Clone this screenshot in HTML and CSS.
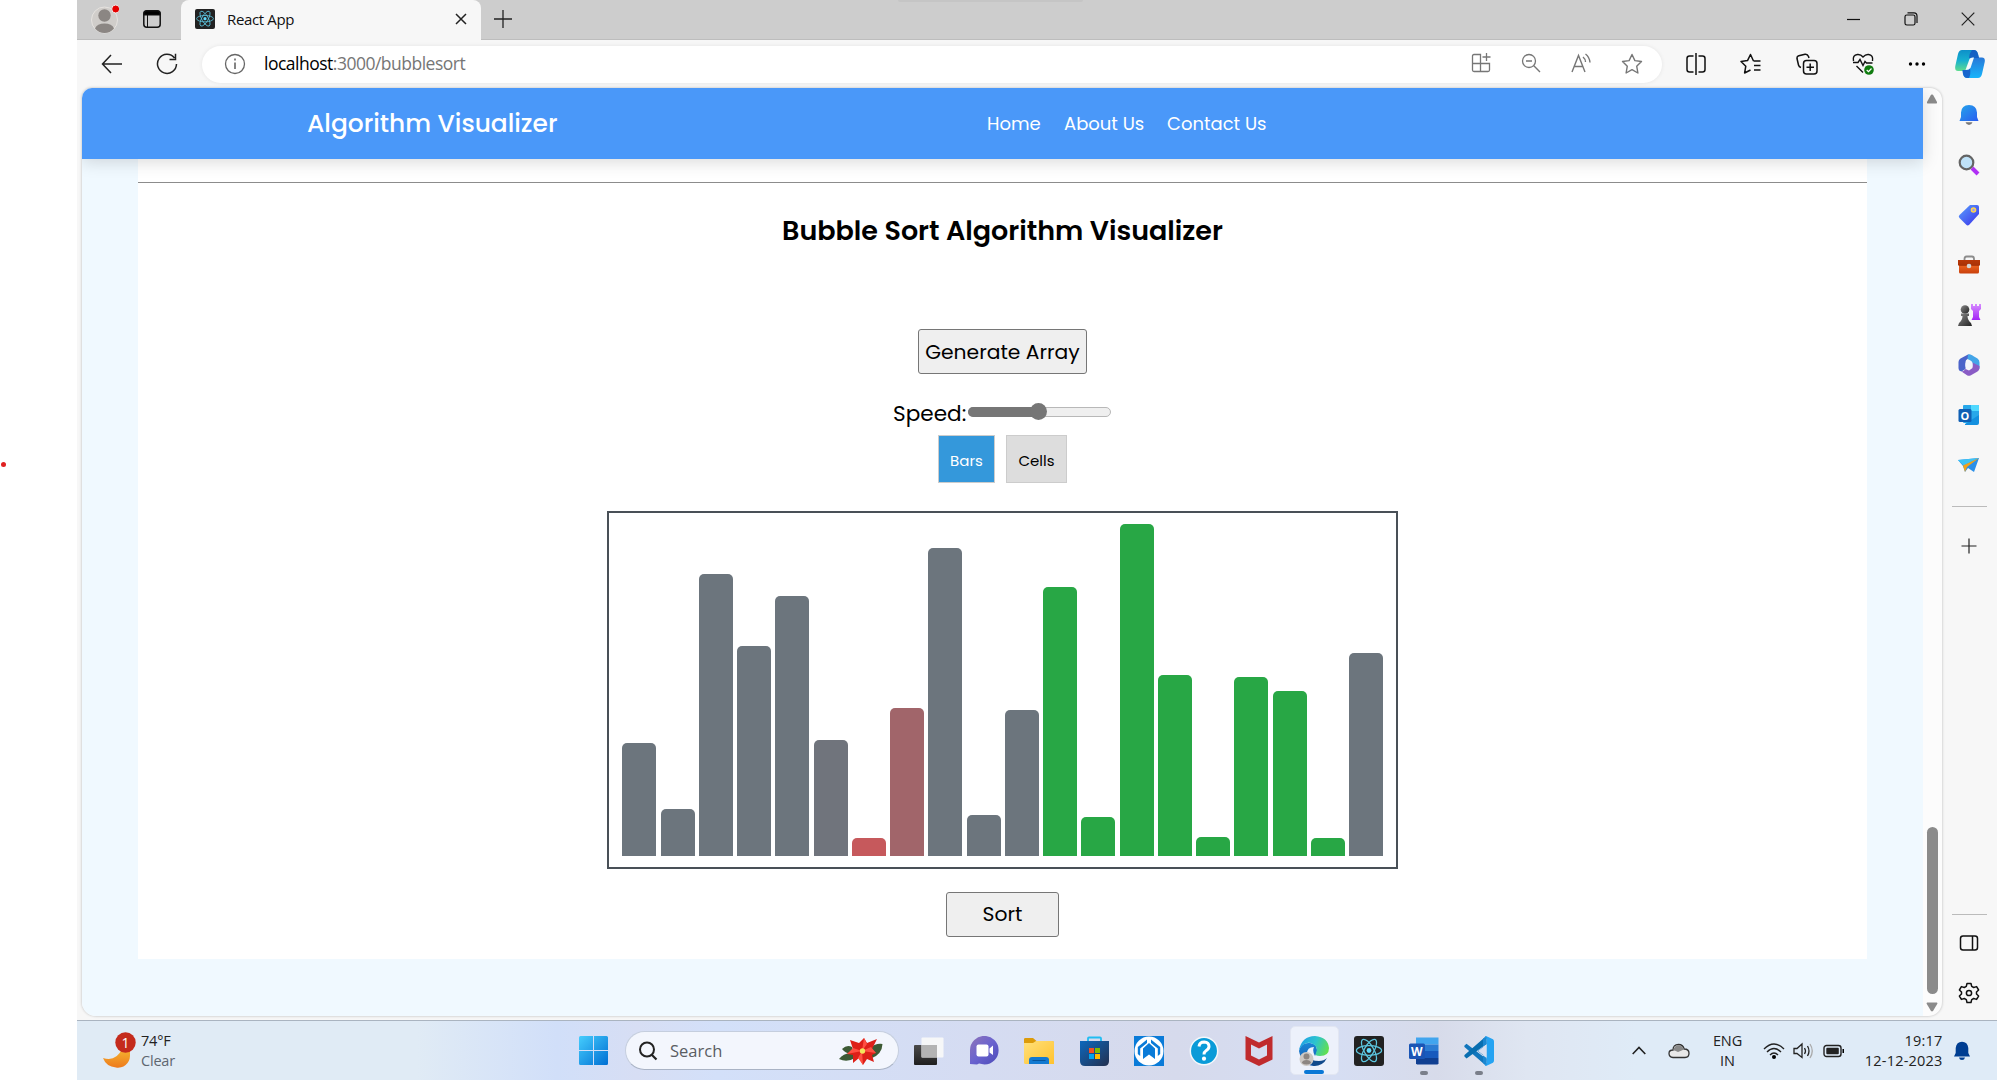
FILE: index.html
```html
<!DOCTYPE html>
<html lang="en">
<head>
<meta charset="utf-8">
<title>React App</title>
<link rel="stylesheet" href="styles.css">
</head>
<body>
<svg class="defs" width="0" height="0">
  <defs>
    <linearGradient id="gWin" x1="0" y1="0" x2="1" y2="1"><stop offset="0" stop-color="#45cdfd"/><stop offset="1" stop-color="#006fd3"/></linearGradient>
    <linearGradient id="gBell" x1="0" y1="0" x2="1" y2="1"><stop offset="0" stop-color="#25a5ea"/><stop offset="1" stop-color="#2a5cf0"/></linearGradient>
    <linearGradient id="gTag" x1="0" y1="0" x2="1" y2="1"><stop offset="0" stop-color="#5aa2ff"/><stop offset="1" stop-color="#3a2fe8"/></linearGradient>
    <linearGradient id="gBox" x1="0" y1="0" x2="0" y2="1"><stop offset="0" stop-color="#b93808"/><stop offset=".4" stop-color="#a83207"/><stop offset=".45" stop-color="#e8601f"/><stop offset="1" stop-color="#c9400c"/></linearGradient>
    <linearGradient id="gPawn" x1="0" y1="0" x2="1" y2="1"><stop offset="0" stop-color="#8a8a8a"/><stop offset="1" stop-color="#222"/></linearGradient>
    <linearGradient id="gRook" x1="0" y1="0" x2="0" y2="1"><stop offset="0" stop-color="#d68bff"/><stop offset="1" stop-color="#a325f5"/></linearGradient>
    <linearGradient id="gChat" x1="0" y1="0" x2="1" y2="1"><stop offset="0" stop-color="#8f74b8"/><stop offset=".5" stop-color="#6a63cf"/><stop offset="1" stop-color="#4c4bb8"/></linearGradient>
    <linearGradient id="gFold" x1="0" y1="0" x2="1" y2="1"><stop offset="0" stop-color="#ffe07a"/><stop offset="1" stop-color="#ffc22e"/></linearGradient>
    <linearGradient id="gStore" x1="0" y1="0" x2="1" y2="1"><stop offset="0" stop-color="#0d68bd"/><stop offset="1" stop-color="#24304f"/></linearGradient>
    <linearGradient id="gMoon" x1="0" y1="0" x2="0" y2="1"><stop offset="0" stop-color="#f5b932"/><stop offset="1" stop-color="#ee7a1c"/></linearGradient>
    <linearGradient id="gEdge" x1="0" y1=".3" x2="1" y2=".6"><stop offset="0" stop-color="#1f9fe6"/><stop offset=".5" stop-color="#2cc3cf"/><stop offset="1" stop-color="#62e04e"/></linearGradient>
    <linearGradient id="gEdge2" x1="0" y1="0" x2="0" y2="1"><stop offset="0" stop-color="#1b87d6"/><stop offset="1" stop-color="#1358b0"/></linearGradient>
    <linearGradient id="gCopA" x1="0" y1="0" x2="0" y2="1"><stop offset="0" stop-color="#0d8fc9"/><stop offset=".5" stop-color="#17b0d0"/><stop offset="1" stop-color="#5fdc8e"/></linearGradient>
    <linearGradient id="gCopB" x1="0" y1="0" x2="0" y2="1"><stop offset="0" stop-color="#2878d8"/><stop offset="1" stop-color="#18b5fb"/></linearGradient>
    <linearGradient id="gTv" x1="0" y1="0" x2="0" y2="1"><stop offset="0" stop-color="#4a4a4a"/><stop offset="1" stop-color="#1f1f1f"/></linearGradient>
    <symbol id="react" viewBox="0 0 30 30">
      <rect width="30" height="30" rx="3" fill="#222"/>
      <g fill="none" stroke="#5cc6df" stroke-width="1.2"><ellipse cx="15" cy="14.5" rx="12.6" ry="4.8"/><ellipse cx="15" cy="14.5" rx="12.6" ry="4.8" transform="rotate(60 15 14.5)"/><ellipse cx="15" cy="14.5" rx="12.6" ry="4.8" transform="rotate(120 15 14.5)"/></g>
      <circle cx="15" cy="14.5" r="2.4" fill="#61dafb"/>
    </symbol>
  </defs>
</svg>
<div class="desk">
  <aside class="margin"><span class="dot"></span></aside>
  <div class="screen">
    <header class="titlebar">
      <div class="profile"><svg width="28" height="30" viewBox="0 0 28 30"><circle cx="13.500" cy="16" r="13" fill="#d0cdca" stroke="#e6e3e0"/><circle cx="13.500" cy="11.500" r="6.200" fill="#8b8683"/><path d="M4 24.500Q6 19.500 13.500 19.500T23 24.500Q19 29 13.500 29T4 24.500Z" fill="#8b8683"/><circle cx="24.700" cy="5" r="4" fill="#e60000" stroke="#eee"/></svg></div>
      <svg class="tabsmenu" width="18" height="18" viewBox="0 0 18 18"><rect x=".8" y=".8" width="16.400" height="16.400" rx="3" fill="none" stroke="#111" stroke-width="1.500"/><path d="M1 5V3Q1 1 3 1H15Q17 1 17 3V5ZM4.500 5V17" stroke="#111"/></svg>
      <div class="tab">
        <svg width="20" height="20"><use href="#react"/></svg>
        <span class="tabname">React App</span>
        <svg width="12" height="12" viewBox="0 0 12 12"><path d="M1 1 11 11M11 1 1 11" stroke="#222" stroke-width="1.500"/></svg>
      </div>
      <svg class="newtab" width="18" height="18" viewBox="0 0 18 18"><path d="M9 0V18M0 9H18" stroke="#222" stroke-width="1.300"/></svg>
      <span class="topline"></span>
      <div class="winbtns">
        <svg width="14" height="14" viewBox="0 0 14 14"><path d="M0 7.500H13" stroke="#111" stroke-width="1.200"/></svg>
        <svg width="14" height="14" viewBox="0 0 14 14"><rect x="1" y="3" width="10" height="10" rx="1.800" fill="none" stroke="#111" stroke-width="1.200"/><path d="M3.500 .8H10Q13 .8 13 4V11" fill="none" stroke="#111" stroke-width="1.200"/></svg>
        <svg width="14" height="14" viewBox="0 0 14 14"><path d="M.7 .7 13.300 13.300M13.300 .7 .7 13.300" stroke="#222" stroke-width="1.200"/></svg>
      </div>
    </header>

    <div class="toolbar">
      <svg class="back" width="22" height="20" viewBox="0 0 22 20"><path d="M21 10H1.500M10 1 1.500 10 10 19" fill="none" stroke="#222" stroke-width="1.500"/></svg>
      <svg class="reload" width="22" height="22" viewBox="0 0 22 22"><path d="M18.500 5A9.500 9.500 0 1 0 20.500 11M19.500 0.800V6.500H13.500" fill="none" stroke="#222" stroke-width="1.500"/></svg>
      <div class="address">
        <svg width="22" height="22" viewBox="0 0 22 22"><circle cx="11" cy="11" r="9.500" fill="none" stroke="#666" stroke-width="1.300"/><path d="M11 9.500V16M11 5.500V7.500" stroke="#666" stroke-width="1.600"/></svg>
        <div class="url"><b>localhost</b>:3000/bubblesort</div>
        <div class="addricons">
          <svg width="20" height="20" viewBox="0 0 20 20"><path d="M9.500 10.500V1.500H3Q1.500 1.500 1.500 3V17Q1.500 18.500 3 18.500H17Q18.500 18.500 18.500 17V10.500H1.500M9.500 10.500V18.500M15.500 0V8M11.500 4H19.500" fill="none" stroke="#767676" stroke-width="1.300"/></svg>
          <svg width="20" height="20" viewBox="0 0 20 20"><circle cx="8" cy="8" r="6.500" fill="none" stroke="#767676" stroke-width="1.300"/><path d="M5 8H11M12.800 12.800 19 19" stroke="#767676" stroke-width="1.400"/></svg>
          <svg width="20" height="20" viewBox="0 0 20 20"><path d="M1 19 7.500 2.500 14 19M3.200 13.500H11.800M12 4Q14.500 6 14.500 9M14.500 1Q18.500 4 19 9.500" fill="none" stroke="#767676" stroke-width="1.400"/></svg>
          <svg width="22" height="22" viewBox="0 0 22 22"><path d="M11 1.500 13.900 7.600 20.500 8.500 15.700 13.200 16.900 20 11 16.700 5.100 20 6.300 13.200 1.500 8.500 8.100 7.600Z" fill="none" stroke="#767676" stroke-width="1.400" stroke-linejoin="round"/></svg>
        </div>
      </div>
      <div class="tools">
        <svg width="20" height="22" viewBox="0 0 20 22"><path d="M7.500 3H3.500Q1 3 1 5.500V16.500Q1 19 3.500 19H7.500M12.500 3H16.500Q19 3 19 5.500V16.500Q19 19 16.500 19H12.500M10 0V22" fill="none" stroke="#111" stroke-width="1.500"/></svg>
        <svg width="22" height="22" viewBox="0 0 22 22"><path d="M13.500 8 10.500 1.500 7.500 7.600 1 8.500 5.800 13.200 4.600 20 10.500 17M13.500 8H20.500M14 12.500H20.500M14 17H20.500" fill="none" stroke="#111" stroke-width="1.500" stroke-linejoin="round"/></svg>
        <svg width="22" height="22" viewBox="0 0 22 22"><rect x="7.500" y="7.500" width="13.500" height="13.500" rx="3" fill="none" stroke="#111" stroke-width="1.500"/><path d="M14.200 10.500V18M10.500 14.200H18M5 14.500Q3 14 2.500 12L1 5.500Q.7 3.300 2.800 2.700L9 1.200Q11.500 .8 12.500 3.500L13 5" fill="none" stroke="#111" stroke-width="1.500"/></svg>
        <svg width="22" height="22" viewBox="0 0 22 22"><path d="M1.500 8Q.3 2 5.500 1.500Q8.800 1.200 11 4Q13.500 1.200 16.500 1.500Q21.500 2.200 20.500 8M1 9.500H6L8 6.500 11 12.500 13 8.500 14.500 10H20.500M4.500 13 11 19.500" fill="none" stroke="#111" stroke-width="1.400"/><circle cx="17" cy="17" r="4.800" fill="#107c10"/><path d="M14.700 17 16.500 18.700 19.500 15.500" fill="none" stroke="#fff" stroke-width="1.200"/></svg>
        <svg width="18" height="6" viewBox="0 0 18 6"><circle cx="2.500" cy="3" r="1.700"/><circle cx="9" cy="3" r="1.700"/><circle cx="15.500" cy="3" r="1.700"/></svg>
      </div>
      <svg class="copilot" width="30" height="28" viewBox="0 0 30 28"><path d="M7 0H19Q22 0 23 4L24 8H19L15 18Q13.500 21 11 21H3Q-.5 21 .3 16L3 4Q4 0 7 0Z" fill="url(#gCopA)"/><path d="M23 28H12Q9 28 8 24L7.500 20H11Q13.500 20 15 17L18 9Q18.700 7.500 20.500 7.500H27Q30.500 7.500 29.700 12L27 24Q26 28 23 28Z" fill="url(#gCopB)"/><path d="M17 0Q14.500 3 14 8L19 8H24L23 4Q22 0 19 0ZM7.500 20 8 24Q9 28 12 28H14Q16 24 15 18L13.500 20Z" fill="#184fc0" opacity=".75"/><path d="M14.500 9Q15.500 7 19 7.500L15.500 18Q14 20 10.500 20Z" fill="#f4fafc"/></svg>
    </div>

    <div class="middle">
      <div class="page">
        <div class="view">
          <nav class="nav">
            <div class="brand">Algorithm Visualizer</div>
            <div class="links"><a class="home">Home</a><a class="about">About Us</a><a class="contact">Contact Us</a></div>
          </nav>
          <main class="panel">
            <div class="rule"></div>
            <h1>Bubble Sort Algorithm Visualizer</h1>
            <button class="generate">Generate Array</button>
            <div class="speed"><span class="speedlabel">Speed:</span><div class="slider"><div class="fill"></div><div class="thumb"></div></div></div>
            <div class="toggle"><button class="bars">Bars</button><button class="cells">Cells</button></div>
            <div class="chart">
              <i style="height:113px"></i><i style="height:47px"></i><i style="height:282px"></i><i style="height:210px"></i><i style="height:260px"></i><i class="fade" style="height:116px"></i><i class="red" style="height:18px"></i><i class="rose" style="height:148px"></i><i style="height:308px"></i><i style="height:41px"></i><i style="height:146px"></i><i class="green" style="height:269px"></i><i class="green" style="height:39px"></i><i class="green" style="height:332px"></i><i class="green" style="height:181px"></i><i class="green" style="height:19px"></i><i class="green" style="height:179px"></i><i class="green" style="height:165px"></i><i class="green" style="height:18px"></i><i style="height:203px"></i>
            </div>
            <button class="sort">Sort</button>
          </main>
        </div>
        <div class="scroll">
          <svg width="12" height="10" viewBox="0 0 12 10"><path d="M5 .8Q6 0 7 .8L11 8Q11.500 9.500 10 9.500H2Q.5 9.500 1 8Z" fill="#8b8b8b"/></svg>
          <div class="grip"></div>
          <svg width="12" height="10" viewBox="0 0 12 10"><path d="M5 9Q6 9.800 7 9L11.500 1.500 11 .5H1L.5 1.500Z" fill="#8b8b8b"/></svg>
        </div>
      </div>
      <aside class="side">
        <svg width="22" height="22" viewBox="0 0 22 22"><path d="M3 13V8.500Q3.500 1 11 1T19 8.500V13L20.500 17H1.500Z" fill="url(#gBell)"/><path d="M7.500 18.200H14.500Q13.500 21 11 21T7.500 18.200Z" fill="#777"/></svg>
        <svg width="22" height="22" viewBox="0 0 22 22"><path d="M14 14 20 20" stroke="#b030f5" stroke-width="4"/><circle cx="8.500" cy="8.500" r="6.800" fill="#bfe2f8" stroke="#646464" stroke-width="2.200"/></svg>
        <svg width="22" height="22" viewBox="0 0 22 22"><path d="M12 1H19Q21 1 21 3V10L11 21Q9.500 22 8 20.500L1.500 14Q0 12.500 1.500 11Z" fill="url(#gTag)"/><circle cx="15.500" cy="6" r="2" fill="#9a93ff" stroke="#ffd54a" stroke-width="1.600"/></svg>
        <svg width="24" height="22" viewBox="0 0 24 22"><path d="M7.500 6V5Q7.500 2.500 9.500 2.500H15Q17 2.500 17 5V6" fill="none" stroke="#8c8c8c" stroke-width="1.800"/><path d="M1 6H23V11L22 12V18Q22 19.500 20.500 19.500H3.500Q2 19.500 2 18V12L1 11Z" fill="url(#gBox)"/><circle cx="12" cy="12" r="2.300" fill="#d5d5d5"/></svg>
        <svg width="24" height="24" viewBox="0 0 24 24"><path d="M14 1H16V3H18V1H20V3H22V1H24V6L22 8V14L23.500 17H14.500L16 14V8L14 6Z" fill="url(#gRook)"/><circle cx="8" cy="6.500" r="4.300" fill="url(#gPawn)"/><path d="M4 10.500H12V13H10.500Q10.500 17 14 20L15 23H1L2 20Q5.500 17 5.500 13H4Z" fill="url(#gPawn)"/></svg>
        <svg width="22" height="22" viewBox="0 0 22 22"><path d="M10 .5 2.500 4.500Q.5 5.500 .5 8V14Q.5 17 3.500 17.500L7.500 15V8Q7.500 6 9.500 5L15 2Z" fill="#4b63c9"/><path d="M10 .5Q12 -.2 13.500 1L19.500 4.500Q21.500 6 21.500 8.500V15L14.500 11.500V9Q14.500 7.500 12.500 6.500L9.500 5Z" fill="#43a5e8"/><path d="M21.500 13.500Q21.500 16.500 19.500 17.500L12.500 21.500Q10.500 22.200 9 21.200L3.500 17.500Q5.500 17.500 7.500 15L11 16.500 14.500 14V8.500L21.500 12Z" fill="#8a5cc5"/><circle cx="11" cy="11" r="3.700" fill="#f3f4fb"/></svg>
        <svg width="22" height="22" viewBox="0 0 22 22"><rect x="5" y="1" width="16" height="18" rx="1" fill="#28a8ea"/><path d="M13 1H20Q21 1 21 2V7H13Z" fill="#50d9ff"/><path d="M7 21H19Q21 21 21 19V11L7 20Z" fill="#1490df"/><rect x=".5" y="5" width="13" height="13" rx="1.500" fill="#0f5fb4"/><text x="7" y="15.500" text-anchor="middle" class="glyph" font-size="11" fill="#fff">O</text></svg>
        <svg width="24" height="22" viewBox="0 0 24 22"><path d="M1 6 22 4 17 18 11 14 8 18 6 12Z" fill="#2b8fe8"/><path d="M1 6 22 4 6.500 11.500Z" fill="#3dc3f5"/><path d="M22 4 6 11.500 8 18 10 13Z" fill="#f2a21b"/></svg>
        <hr class="first">
        <svg class="plus" width="16" height="16" viewBox="0 0 16 16"><path d="M8 .5V15.500M.5 8H15.500" stroke="#222" stroke-width="1.200"/></svg>
        <span class="grow"></span>
        <hr>
        <svg class="pane" width="20" height="18" viewBox="0 0 20 18"><rect x="1.500" y="2" width="17" height="14" rx="2.500" fill="none" stroke="#111" stroke-width="1.500"/><path d="M13.500 2V16" stroke="#111" stroke-width="1.500"/></svg>
        <svg class="gear" width="22" height="22" viewBox="0 0 22 22"><path d="M9 1.500H13L13.700 4.400 15.700 5.500 18.600 4.600 20.600 8 18.500 10V12L20.600 14 18.600 17.400 15.700 16.500 13.700 17.600 13 20.500H9L8.300 17.600 6.300 16.500 3.400 17.400 1.400 14 3.500 12V10L1.400 8 3.400 4.600 6.300 5.500 8.300 4.400Z" fill="none" stroke="#111" stroke-width="1.500" stroke-linejoin="round"/><circle cx="11" cy="11" r="2.600" fill="none" stroke="#111" stroke-width="1.500"/></svg>
      </aside>
    </div>

    <footer class="taskbar">
      <div class="weather">
        <svg width="34" height="38" viewBox="0 0 34 38"><path d="M28 15.500V24A12 12 0 0 1 14 35.500Q4 34.500 1 26Q14 30 20 17Z" fill="url(#gMoon)"/><circle cx="23.500" cy="10.500" r="10.200" fill="#c42b1c"/><text x="23.500" y="15.500" text-anchor="middle" class="seg" font-size="14" fill="#fff">1</text></svg>
        <div class="wtext"><div>74°F</div><div class="dim">Clear</div></div>
      </div>
      <svg class="start" width="29" height="29" viewBox="0 0 29 29"><path d="M0 1.500Q0 0 1.500 0H14V14H0ZM15 0H27.500Q29 0 29 1.500V14H15ZM0 15H14V29H1.500Q0 29 0 27.500ZM15 15H29V27.500Q29 29 27.500 29H15Z" fill="url(#gWin)"/></svg>
      <div class="search">
        <svg width="20" height="20" viewBox="0 0 20 20"><circle cx="9" cy="8.500" r="7" fill="none" stroke="#222" stroke-width="2"/><path d="M13.500 13.500 18.500 18.500" stroke="#222" stroke-width="2.200"/></svg>
        <span>Search</span>
        <svg width="44" height="28" viewBox="0 0 44 28"><path d="M14 17Q6 15 0 22Q8 26 16 21ZM3 12Q8 7 13 10L15 16Q8 18 3 12ZM30 12Q36 6 43.500 7Q43 17 33 21Z" fill="#3d5a34"/><path d="M11 3 20 6 25 1 28 6 38 2 33 12 37 16 33 18 35 25 28 22 24 28 20 21 14 26 14 18 8 17 14 12Z" fill="#dd2018"/><path d="M23 14 25 1 28 7ZM23 14 37 16 32 10ZM23 14 24 28 19 21ZM23 14 8 17 14 11Z" fill="#ff5042"/><circle cx="23.500" cy="14" r="2.700" fill="#f3e65d"/></svg>
      </div>
      <div class="apps">
        <div><svg width="30" height="28" viewBox="0 0 30 28"><rect x="0" y="8" width="23" height="20" rx="1" fill="url(#gTv)"/><rect x="7.500" y=".5" width="22" height="20" rx="1" fill="#f8f8f8" opacity=".95"/><rect x="7.500" y="8" width="15.500" height="12.500" fill="#b3b3b3"/></svg></div>
        <div><svg width="29" height="29" viewBox="0 0 29 29"><path d="M0 28V14A14.300 14.300 0 1 1 14.500 28.500L9 27.500 7 28.500Z" fill="url(#gChat)"/><rect x="6.500" y="8.500" width="12" height="12" rx="2" fill="#fff"/><path d="M19.500 12.500 23 9.500V19L19.500 16.500Z" fill="#fff"/></svg></div>
        <div><svg width="30" height="28" viewBox="0 0 30 28"><path d="M0 2Q0 1 1.500 1H9L12.500 4H28Q30 4 30 6V10H0Z" fill="#dc9b0a"/><path d="M0 6H9L12 4H28.500Q30 4 30 5.500V27H1.500Q0 27 0 25.500Z" fill="url(#gFold)"/><path d="M5 27V23Q5 20 8 20H22Q25 20 25 23V27Z" fill="#137ad1"/><path d="M8.500 23.500H21.500" stroke="#07559b"/></svg></div>
        <div><svg width="29" height="30" viewBox="0 0 29 30"><path d="M8 6V2.500Q8 1.500 9 1.500H20Q21 1.500 21 2.500V6" fill="none" stroke="#20bdf2" stroke-width="1.800"/><path d="M0 5H29V25Q29 30 24 30H5Q0 30 0 25Z" fill="url(#gStore)"/><path d="M9 12H14V17H9Z" fill="#f25022"/><path d="M15 12H20V17H15Z" fill="#7fba00"/><path d="M9 18H14V23H9Z" fill="#00a4ef"/><path d="M15 18H20V23H15Z" fill="#ffb900"/></svg></div>
        <div><svg width="30" height="30" viewBox="0 0 30 30"><path d="M0 0H30V30H0Z" fill="#0a7bd8"/><circle cx="15" cy="15" r="14.500" fill="#fff"/><path d="M9 23V12.500L15 7 21 12.500V23L15 18.500Z" fill="#0a7bd8"/><path d="M3.800 18V11L13 3.500V7L6.200 12.500V20ZM26.200 18V11L17 3.500V7L23.800 12.500V20Z" fill="#0a7bd8"/></svg></div>
        <div><svg width="30" height="30" viewBox="0 0 30 30"><circle cx="15" cy="15" r="13.700" fill="#0a9bd8" stroke="#f4f8fb" stroke-width="1.500"/><path d="M10 10.500Q10.500 6 15.200 6Q20 6.200 20 10.500Q20 12.800 17 14.700Q15 16 15 18.500" fill="none" stroke="#fff" stroke-width="3"/><circle cx="15" cy="22.700" r="2.100" fill="#fff"/></svg></div>
        <div><svg width="28" height="30" viewBox="0 0 28 30"><path d="M.5 0 14 6.500 27.500 0V23.500L14 30 .5 23.500ZM6 8.500V19.500L14 23.500 22 19.500V8.500L14 12.500Z" fill="#c02b2d" fill-rule="evenodd"/></svg></div>
        <div class="active"><svg width="30" height="30" viewBox="0 0 30 30"><path d="M0 15Q2 6 11 7Q19 8 18 16L16 20Q13 15 15 11Q7 11 8 20Q10 28 18 30Q3 31 0 15Z" fill="url(#gEdge2)"/><path d="M0 14Q3 0 16 0Q29 1 30 12Q30 20 21 20Q15 20 17 17Q20 10 12 7Q5 5 0 14Z" fill="url(#gEdge)"/><path d="M9 20Q11 25 20 25Q25 25 28 22Q24 30 15 30Q10 28 9 20Z" fill="#114a8b"/><circle cx="7.500" cy="23" r="7" fill="#ccc7c3"/><circle cx="7.500" cy="20.500" r="3" fill="#8c8581"/><path d="M2.800 27Q3.500 24 7.500 24T12.200 27Q7.500 30 2.800 27Z" fill="#8c8581"/></svg><s></s></div>
        <div><svg width="30" height="30"><use href="#react"/></svg></div>
        <div class="open"><svg width="30" height="30" viewBox="0 0 30 30"><path d="M7 1.500H29.500V8.500H7Z" fill="#41a5ee"/><path d="M7 8.500H29.500V15H7Z" fill="#2b7cd3"/><path d="M7 15H29.500V22H7Z" fill="#185abd"/><path d="M7 22H29.500V27.500L28.500 28.500H8L7 27.500Z" fill="#103f91"/><rect x="0" y="7.500" width="16" height="15.500" rx="1.500" fill="#1a55b5"/><text x="7.800" y="19.500" text-anchor="middle" class="glyph" font-size="12" fill="#fff">W</text></svg><s></s></div>
        <div class="open"><svg width="30" height="30" viewBox="0 0 30 30"><path d="M2.500 7.800 .5 9.500Q0 10 .5 11L20 28 22 30 22.500 23Z" fill="#1176bd"/><path d="M2.500 22.500 .5 20.500Q0 20 .5 19L20 2 22 0 22.500 8Z" fill="#086eb0"/><path d="M22 0 29 3.300Q30 4 30 5.500V24.500Q30 26 29 26.700L22 30 20.500 28.500 22.500 27V3L20.500 1.500Z" fill="#25a3f2"/><path d="M22.500 8V1L19 2.500V27L22.500 29V22L13.500 15Z" fill="#1b87d1"/><path d="M22.500 8.500V21.500L14 15Z" fill="#d8dff0"/></svg><s></s></div>
      </div>
      <div class="tray">
        <svg width="14" height="9" viewBox="0 0 14 9"><path d="M.7 8 7 1.500 13.300 8" fill="none" stroke="#222" stroke-width="1.600"/></svg>
        <svg class="cloud" width="22" height="16" viewBox="0 0 22 16"><path d="M5 14.500Q1 14 1 10.500Q1 7 5 7Q5 1.500 10.500 1.500Q15 1.500 16.200 6Q21 6 21 10.300Q21 14.500 17 14.500Z" fill="#e8e8e8" stroke="#333" stroke-width="1.300"/><path d="M2.500 8Q5 6 10 9L16 6.500Q14 2 10 2.300Q6 3 5.500 7Z" fill="#888"/></svg>
        <div class="lang"><div>ENG</div><div>IN</div></div>
        <svg class="wifi" width="22" height="18" viewBox="0 0 22 18"><path d="M1 7Q11-3 21 7M4 10Q11 3 18 10M7 13Q11 9 15 13" fill="none" stroke="#222" stroke-width="1.400"/><circle cx="11" cy="15" r="2"/></svg>
        <svg class="sound" width="22" height="18" viewBox="0 0 22 18"><path d="M1 6.500H4L9 2V15.500L4 11.500H1ZM11.500 6Q13.500 9 11.500 12M14.500 4Q17.500 9 14.500 14" fill="none" stroke="#222" stroke-width="1.300"/><path d="M17 2Q21.500 9 17 16" fill="none" stroke="#aaa" stroke-width="1.300"/></svg>
        <svg class="battery" width="22" height="14" viewBox="0 0 22 14"><rect x="1" y="1.500" width="17" height="11" rx="2.500" fill="none" stroke="#222" stroke-width="1.400"/><rect x="3.300" y="3.800" width="12.500" height="6.500" rx="1" fill="#222"/><path d="M19.500 5V9H21V5Z"/></svg>
        <div class="clock"><div>19:17</div><div>12-12-2023</div></div>
        <svg class="notif" width="16" height="20" viewBox="0 0 16 20"><path d="M1.700 12V7Q2.500 .8 8 .8T14.300 7V12L16 15.500H0ZM5 16.500H11Q10.500 19 8 19T5 16.500Z" fill="#003e92"/></svg>
      </div>
    </footer>
  </div>
</div>
</body>
</html>
```

FILE: styles.css
```css
* { box-sizing: border-box; }
body { margin: 0; background: #fff; font-family: Poppins, Inter, sans-serif; color: #000; overflow: hidden; }
svg { display: block; flex: none; }
.defs { position: absolute; }
.desk { display: flex; width: 1997px; height: 1080px; }
.margin { width: 77px; flex: none; padding-top: 462px; }
.dot { display: block; width: 5px; height: 5px; margin-left: 1px; border-radius: 50%; background: #e02020; }
.screen { width: 1920px; display: flex; flex-direction: column; background: #f7f7f7; }
.glyph { font-family: "Open Sans", sans-serif; font-weight: 700; }
.seg { font-family: "Open Sans", sans-serif; }

.titlebar { height: 40px; padding-bottom: 1px; background: #cdcdcd; display: flex; align-items: center; border-bottom: 1px solid #bdbdbd; }
.profile { margin: 0 0 0 14px; width: 28px; }
.tabsmenu { margin-left: 24px; }
.tab { height: 40px; width: 300px; margin: 1px 0 -1px 20px; padding: 0 14px 2px 14px; background: #f7f7f7; border-radius: 8px 8px 0 0; display: flex; align-items: center; }
.tabname { flex: 1; margin-left: 12px; font: 15px "Open Sans", sans-serif; letter-spacing: -.35px; color: #111; }
.newtab { margin-left: 13px; }
.topline { width: 185px; height: 2px; margin-left: 386px; align-self: flex-start; background: #c5c5c5; border-radius: 0 0 4px 4px; }
.winbtns { margin-left: auto; margin-right: 22px; display: flex; gap: 43px; }

.toolbar { height: 48px; display: flex; align-items: center; }
.back { margin-left: 24px; }
.reload { margin-left: 33px; }
.address { width: 1460px; height: 37px; margin-left: 24px; padding-left: 22px; background: #fff; border-radius: 19px; box-shadow: 0 0 4px rgba(0,0,0,.08); display: flex; align-items: center; }
.url { flex: 1; margin: 0 0 2px 18px; font: 17.500px "Open Sans", sans-serif; letter-spacing: -.5px; color: #767676; }
.url b { font-weight: 400; color: #000; }
.addricons { display: flex; gap: 30px; margin-right: 19px; }
.tools { display: flex; align-items: center; gap: 34px; margin-left: 24px; }
.copilot { margin-left: 29px; }

.middle { height: 933px; display: flex; border-bottom: 1px solid #aab4c0; }
.page { width: 1860px; height: 928px; margin-left: 5px; border-radius: 10px 12px 14px 14px; background: #fcfcfc; display: flex; overflow: hidden; box-shadow: 0 0 2px 1px #d8d8d8; }
.view { width: 1841px; background: #f0f9ff; }
.nav { position: relative; height: 71px; background: #4a98f9; color: #fff; box-shadow: 0 3px 16px rgba(0,0,0,.15); display: flex; align-items: center; }
.brand { width: 680px; padding-left: 225px; flex: none; font-size: 24.900px; font-weight: 500; white-space: nowrap; }
.links { display: flex; font-size: 18px; margin-left: 225px; }
.links a { white-space: nowrap; }
.home { width: 77px; }
.about { width: 103px; }
.panel { width: 1729px; height: 800px; margin-left: 56px; background: #fff; display: flex; flex-direction: column; align-items: center; }
.rule { width: 100%; height: 1px; margin-top: 23px; background: #8c8c8c; flex: none; }
h1 { margin: 28px 0 0; height: 40px; line-height: 40px; font-size: 27px; font-weight: 600; white-space: nowrap; }
button { font-family: Poppins, Inter, sans-serif; padding: 0; background: #efefef; border: 1px solid #767676; border-radius: 3px; font-size: 20.300px; color: #000; white-space: nowrap; flex: none; }
.generate { margin-top: 78px; width: 169px; height: 45px; }
.speed { margin-top: 24px; height: 30px; width: 218px; margin-right: 1px; display: flex; align-items: center; justify-content: space-between; font-size: 21.600px; }
.slider { width: 143px; height: 10px; margin-bottom: 3px; border: 1px solid #b8b8b8; border-radius: 5px; background: #efefef; position: relative; }
.fill { position: absolute; left: -1px; top: -1px; width: 70px; height: 10px; border-radius: 5px; background: #767676; }
.thumb { position: absolute; left: 61px; top: -5px; width: 17px; height: 17px; border-radius: 50%; background: #767676; }
.toggle { margin-top: 7px; display: flex; gap: 11px; }
.toggle button { height: 48px; padding-top: 2px; border: 1px solid #ccc; border-radius: 0; font-size: 15px; background: #ddd; }
.toggle .bars { width: 57px; background: #3498db; color: #fff; }
.toggle .cells { width: 61px; }
.chart { margin-top: 28px; width: 791px; height: 358px; flex: none; border: 2px solid #495057; padding: 11px 12.700px 11px 13.300px; display: flex; align-items: flex-end; justify-content: space-between; }
.chart i { width: 34px; background: #6c757d; border-radius: 5px 5px 0 0; }
.chart .fade { background: #70747c; }
.chart .red { background: #c6595c; }
.chart .rose { background: #a1656a; }
.chart .green { background: #28a745; }
.sort { margin-top: 23px; width: 113px; height: 45px; padding-bottom: 1px; }
.scroll { width: 19px; display: flex; flex-direction: column; align-items: center; padding: 6px 1px 4px 0; }
.grip { width: 11px; height: 167px; margin: auto 0 8px; border-radius: 6px; background: #8b8b8b; }

.side { width: 55px; display: flex; flex-direction: column; align-items: center; padding: 2px 1px 0 0; }
.side > svg { height: 50px; }
.side hr { width: 35px; height: 1px; margin: 2px 0 0; border: 0; background: #bbb; flex: none; }
.side .first { margin-top: 16px; }
.side .plus { height: 16px; margin: 31px 0 0; }
.grow { flex: 1; }
.side .pane { height: 18px; margin: 19px 0 0; }
.side .gear { height: 22px; margin: 30px 0 16px; }

.taskbar { height: 59px; display: flex; align-items: center; background: linear-gradient(90deg, #e0ebf5 0, #e0ebf5 340px, #d1dff9 480px, #d7def4 560px, #d3e0f9 640px, #d5dcf2 900px, #d6daec 1100px, #d6def3 1260px, #d7dbea 1360px, #dfe6f2 1450px, #dfebf7 1560px); font: 14.500px/20px "Open Sans", sans-serif; color: #222; }
.weather { width: 502px; padding-left: 25px; display: flex; gap: 5px; }
.weather > svg { margin-top: 1px; }
.wtext .dim { color: #5e6670; }
.wtext { letter-spacing: -.2px; }
.search { width: 274px; height: 39px; margin-left: 17px; border-radius: 20px; background: #f3f6fd; border: 1px solid #c5cede; border-bottom-color: #a9b3c5; display: flex; align-items: center; padding: 0 15px 0 12px; font-size: 16.500px; color: #5a5d63; }
.search span { flex: 1; margin-left: 12px; }
.apps { display: flex; margin-left: 2.500px; }
.apps > div { width: 55px; height: 59px; display: flex; align-items: center; justify-content: center; position: relative; }
.apps .active { width: 49px; height: 49px; margin: 5px 3px 0; background: #edf1fb; border: 1px solid #e2e6f2; border-radius: 5px; }
.apps s { position: absolute; bottom: 5px; width: 8px; height: 4px; border-radius: 2px; background: #7a7f8a; }
.apps .active s { bottom: 0; width: 20px; background: #0a78d6; }
.tray { display: flex; align-items: center; margin-left: 125px; }
.cloud { margin-left: 22px; }
.lang { width: 36px; margin-left: 20px; text-align: center; letter-spacing: -.1px; }
.wifi { margin-left: 17px; }
.sound { margin-left: 8px; }
.battery { margin-left: 8px; }
.clock { width: 98px; text-align: right; letter-spacing: .2px; }
.notif { margin-left: 11px; }
```
